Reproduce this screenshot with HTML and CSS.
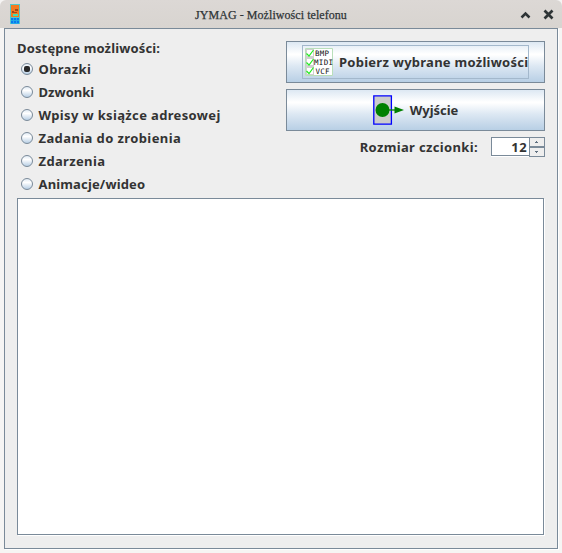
FILE: index.html
```html
<!DOCTYPE html>
<html lang="pl">
<head>
<meta charset="utf-8">
<title>JYMAG - Możliwości telefonu</title>
<link rel="stylesheet" href="styles.css">
</head>
<body>
<div class="window">
  <header class="titlebar">
    <svg class="app-icon" width="10" height="20" viewBox="0 0 10 20" shape-rendering="crispEdges">
      <path fill="#55c8c8" d="M0 0h10v20H0z"/>
      <path fill="#f47a20" d="M1 1h8v12H1z"/>
      <path fill="#9a4a20" d="M5 5h3v2H5zM2 7h2v2H2zM4 8h3v1H4z"/>
      <path fill="#40e0b0" d="M3 10h5v2H3z"/>
      <path fill="#0878f0" d="M1 14h8v6H1z"/>
      <path fill="#20a8e8" d="M1 16h8v1H1zM3 14h1v6H3zM6 14h1v6H6zM1 19h8v1H1z"/>
    </svg>
    <h1 class="title"><span>JYMAG - Możliwości telefonu</span></h1>
    <svg class="controls" width="36" height="12" viewBox="0 0 36 12" fill="none" stroke="#2e3436">
      <path d="M1.500 8.500L5.500 4.500l4 4" stroke-width="2.5"/>
      <path d="M24.500 1.500l8 8M32.500 1.500l-8 8" stroke-width="2.700"/>
    </svg>
  </header>
  <main class="panel">
    <div class="top">
      <section class="options">
        <p class="caption">Dostępne możliwości:</p>
        <label class="option"><i class="radio checked"></i><span class="t-obr">Obrazki</span></label>
        <label class="option"><i class="radio"></i><span class="t-dzw">Dzwonki</span></label>
        <label class="option"><i class="radio"></i><span class="t-wpi">Wpisy w książce adresowej</span></label>
        <label class="option"><i class="radio"></i><span class="t-zad">Zadania do zrobienia</span></label>
        <label class="option"><i class="radio"></i><span class="t-zda">Zdarzenia</span></label>
        <label class="option"><i class="radio"></i><span class="t-ani">Animacje/wideo</span></label>
      </section>
      <section class="actions">
        <button class="button"><span class="focus">
          <svg class="list-icon" width="28" height="28" viewBox="0 0 28 28">
            <path fill="#fff" stroke="#b9dfba" d="M.5.5h27v27H.5z"/>
            <path fill="#d0d0d0" d="M1 1h8v26H1z"/>
            <path fill="#fff" d="M2 2h6v6H2zM2 11h6v6H2zM2 20h6v6H2z"/>
            <path fill="none" stroke="#20ee20" stroke-width="1.2" d="M1.5 5.5L4 8l4.5-6M1.5 14.5L4 17l4.5-6M1.5 23L4 25.5l4.500-6"/>
            <g class="icon-text"><text x="10" y="8" textLength="14">BMP</text><text x="9" y="17" textLength="19">MIDI</text><text x="10.500" y="25.500" textLength="14">VCF</text></g>
          </svg>
          <span class="t-pob">Pobierz wybrane możliwości</span></span></button>
        <button class="button">
          <svg class="exit-icon" width="31" height="30" viewBox="0 0 31 30">
            <path fill="#ccc" stroke="#00f" stroke-width="1.300" d="M.8.8h17.600v28.400H.8z"/>
            <circle cx="9.500" cy="15" r="7" fill="#008000"/>
            <path stroke="#008000" stroke-width="1.300" d="M16 15h9"/>
            <path fill="#008000" d="M21.500 11.500l9.500 3.500-9.500 3.500z"/>
          </svg>
          <span class="t-wyj">Wyjście</span></button>
        <div class="font-row">
          <span class="t-roz">Rozmiar czcionki:</span>
          <span class="spinner"><span class="value">12</span>
            <svg width="16" height="20" viewBox="0 0 16 20" shape-rendering="crispEdges">
              <path fill="#eee" stroke="#7a8a99" d="M.5.5h15v9H.5zM.5 10.500h15v9H.5z"/>
              <path fill="#5f7080" d="M7 4h1v1H7zM6 5h3v1H6zM6 14h3v1H6zM7 15h1v1H7z"/>
            </svg>
          </span>
        </div>
      </section>
    </div>
    <div class="textarea"></div>
  </main>
</div>
</body>
</html>
```
FILE: styles.css
```css
* { box-sizing: border-box; }
body { margin: 0; background: #f6f5f4; color: #333; font: bold 13px/16px "Noto Sans", sans-serif; }
.window { width: 562px; height: 553px; }
.titlebar { display: flex; align-items: flex-start; height: 28px; padding: 4px 6px 0 10px; background: linear-gradient(#dcd8d5, #d8d4d0); border-radius: 6px 6px 0 0; }
.title { flex: 1; margin: 3px 0 0 175px; color: #2e3436; font: 12px/16px "Liberation Serif", serif; -webkit-text-stroke: .25px #2e3436; letter-spacing: .06px; white-space: nowrap; }
.controls { margin-top: 5px; }
.panel { width: 554px; height: 521px; margin-left: 4px; padding: 12px 12px 13px; background: #eee; border: 1px solid #7a8a99; box-shadow: 1px 1px #fff; }
.top { display: flex; justify-content: space-between; height: 157px; }
.options { width: 260px; margin-top: -1px; white-space: nowrap; }
.caption { margin: 0; height: 17px; letter-spacing: .15px; }
.option { display: flex; align-items: center; gap: 5.5px; height: 23px; padding-left: 4px; }
.radio { width: 12px; height: 12px; border: 1px solid #7a8a99; border-radius: 50%; background: linear-gradient(#e2ecf5, #fff 35%, #b8cfe5); display: flex; align-items: center; justify-content: center; }
.checked::after { content: ""; width: 6px; height: 6px; border-radius: 2px; background: #292929; }
.actions { width: 259px; white-space: nowrap; }
.button { display: flex; align-items: center; justify-content: center; width: 259px; height: 42px; margin: 0 0 6px; padding: 0; border: 1px solid #7a8a99; background: linear-gradient(#dde8f3, #fff 30%, #fff 32%, #dde8f3 60%, #b8cfe5); color: #333; font: inherit; }
.focus { display: flex; align-items: center; gap: 6px; width: 227px; height: 34px; padding-left: 2px; border: 1px solid #a3b8cc; }
.list-icon { flex: none; }
.icon-text { font: 7.500px "DejaVu Sans Mono", monospace; fill: #111; }
.exit-icon { margin-right: 6px; }
.font-row { display: flex; align-items: center; justify-content: flex-end; height: 20px; gap: 13px; }
.spinner { display: flex; width: 54px; height: 20px; }
.value { width: 38px; height: 19px; line-height: 18px; padding-right: 2px; background: #fff; border: 1px solid #7a8a99; border-right: 0; text-align: right; letter-spacing: .4px; box-shadow: 0 1px #fff; }
.textarea { width: 527px; height: 337px; background: #fff; border: 1px solid #7a8a99; box-shadow: 1px 1px #fff; }
.t-obr, .t-zda, .t-roz { letter-spacing: .35px; }
.t-dzw { letter-spacing: .03px; }
.t-wpi { letter-spacing: .35px; }
.t-zad { letter-spacing: .4px; }
.t-ani { letter-spacing: .15px; }
.t-pob { letter-spacing: .26px; }
.t-wyj { letter-spacing: -.05px; }
```
